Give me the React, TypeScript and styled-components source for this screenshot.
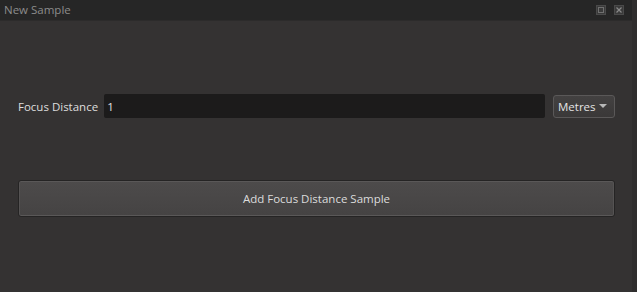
import React, { useState } from "react";
import styled, { createGlobalStyle } from "styled-components";

const GlobalStyle = createGlobalStyle`
  html, body {
    margin: 0;
    padding: 0;
    background: #343232;
  }
  * { box-sizing: border-box; }
`;

const Window = styled.div`
  width: 637px;
  height: 292px;
  display: flex;
  flex-direction: column;
  background: #343232;
  font-family: "Open Sans", "Noto Sans", sans-serif;
  font-size: 11.5px;
  color: #dcdcdc;
  border-right: 5px solid #2f2d2d;
`;

const TitleBar = styled.div`
  height: 21px;
  flex: 0 0 21px;
  display: flex;
  align-items: center;
  justify-content: space-between;
  padding: 0 8px 0 4px;
  background: #262626;
  border-bottom: 1px solid #2c2b2b;
`;

const Title = styled.span`
  color: #8c8c8c;
  font-size: 11.5px;
  line-height: 1;
`;

const TitleButtons = styled.div`
  display: flex;
  gap: 8px;
  align-items: center;
`;

const TitleButton = styled.div`
  width: 10px;
  height: 10px;
  display: flex;
  align-items: center;
  justify-content: center;
  background: #3a3a3a;
  border: 1px solid #4a4a4a;
`;

const Body = styled.div`
  flex: 1;
  display: flex;
  flex-direction: column;
  padding: 73px 17px 0 18px;
`;

const Row = styled.div`
  display: flex;
  align-items: center;
  height: 24px;
`;

const Label = styled.label`
  margin-right: 6px;
  color: #dedede;
  white-space: nowrap;
`;

const Input = styled.input`
  flex: 1;
  height: 24px;
  background: #1c1b1b;
  border: none;
  border-radius: 2px;
  padding: 0 3px;
  color: #e0e0e0;
  font-family: inherit;
  font-size: 11.5px;
  outline: none;
`;

const Select = styled.div`
  margin-left: 8px;
  width: 62px;
  height: 23px;
  display: flex;
  align-items: center;
  justify-content: space-between;
  padding: 0 7px 0 4px;
  background: linear-gradient(#434141, #3a3838);
  border: 1px solid #5a5858;
  border-radius: 3px;
  color: #e4e4e4;
`;

const Caret = styled.span`
  width: 0;
  height: 0;
  border-left: 4px solid transparent;
  border-right: 4px solid transparent;
  border-top: 4px solid #b8b8b8;
`;

const AddButton = styled.button`
  margin-top: 62px;
  height: 37px;
  width: 100%;
  background: linear-gradient(#4d4b4b, #454343);
  border: 1px solid #252424;
  border-radius: 3px;
  box-shadow: inset 0 1px 0 #5a5858, inset 0 -1px 0 #5a5858, inset 1px 0 0 #555353, inset -1px 0 0 #555353;
  color: #dcdcdc;
  font-family: inherit;
  font-size: 11.5px;
  cursor: pointer;
`;

const App = () => {
  const [distance, setDistance] = useState("1");

  return (
    <>
      <GlobalStyle />
      <Window>
        <TitleBar>
          <Title>New Sample</Title>
          <TitleButtons>
            <TitleButton>
              <svg width="6" height="6" viewBox="0 0 6 6">
                <rect x="0.5" y="0.5" width="5" height="5" fill="none" stroke="#707070" />
              </svg>
            </TitleButton>
            <TitleButton>
              <svg width="6" height="6" viewBox="0 0 6 6">
                <path d="M0.5 0.5 L5.5 5.5 M5.5 0.5 L0.5 5.5" stroke="#8a8a8a" strokeWidth="1.2" />
              </svg>
            </TitleButton>
          </TitleButtons>
        </TitleBar>
        <Body>
          <Row>
            <Label htmlFor="focusDistance">Focus Distance</Label>
            <Input
              id="focusDistance"
              value={distance}
              onChange={(e) => setDistance(e.target.value)}
            />
            <Select>
              Metres
              <Caret />
            </Select>
          </Row>
          <AddButton>Add Focus Distance Sample</AddButton>
        </Body>
      </Window>
    </>
  );
};

export default App;
